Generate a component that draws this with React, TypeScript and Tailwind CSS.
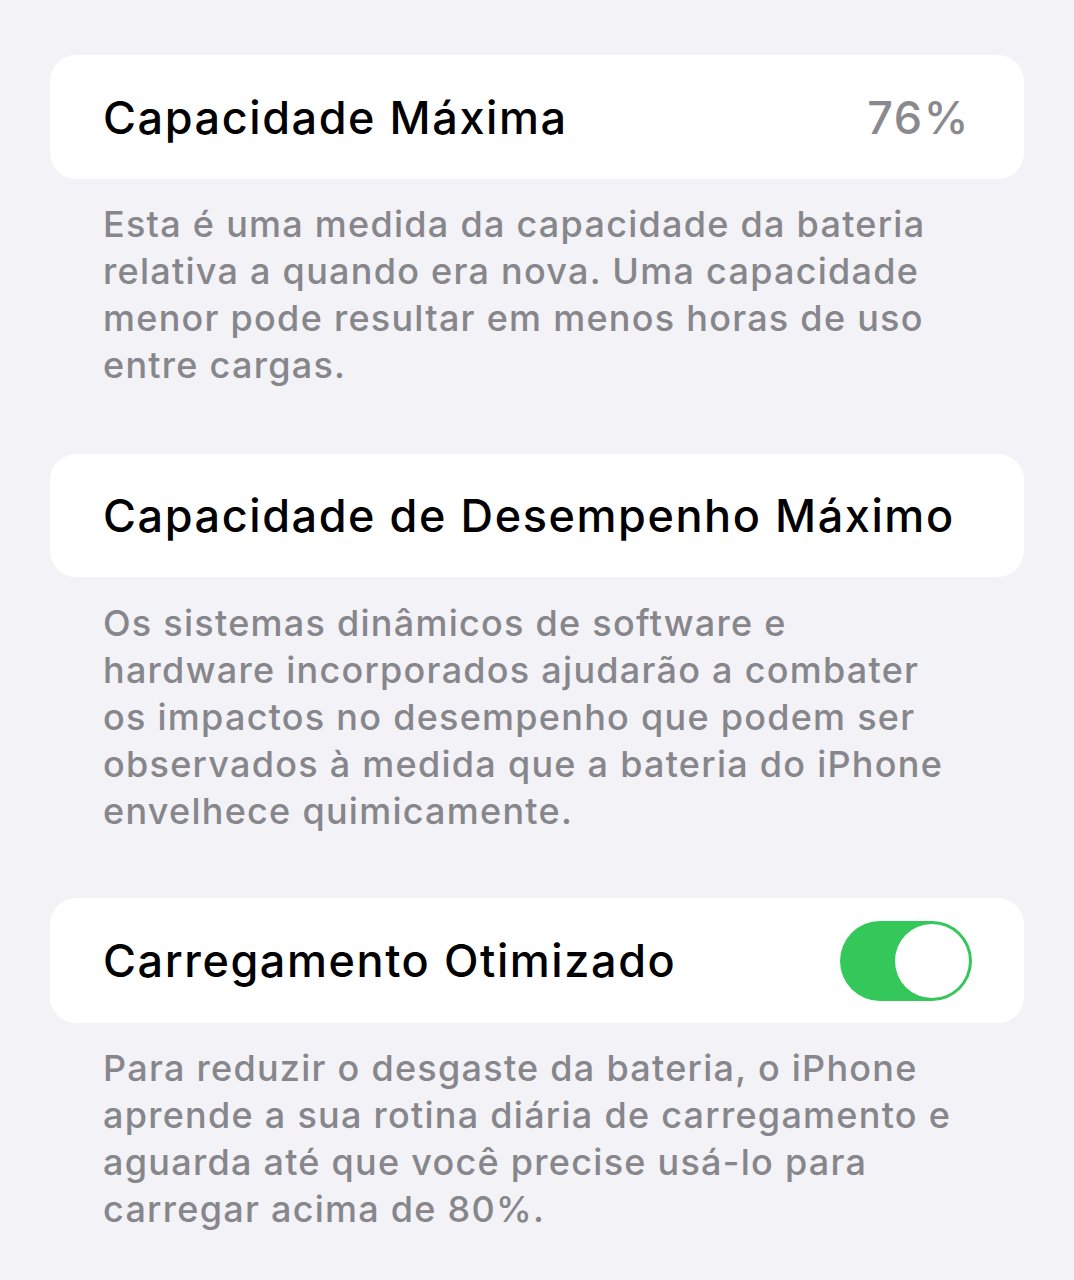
export default function App() {
  return (
    <div className="min-h-[1280px] w-full bg-[#f2f2f7] px-[50px] pt-[55px] font-['Inter','Noto_Sans',sans-serif]">
      <div className="flex h-[124px] items-center justify-between rounded-[26px] bg-white pl-[53px] pr-[54px]">
        <span className="text-[45px] font-medium leading-none tracking-[0.035em] text-black">Capacidade Máxima</span>
        <span className="text-[45px] font-medium leading-none tracking-[0.035em] text-[#8a8a8e]">76%</span>
      </div>
      <p className="mb-[65px] pl-[53px] pr-[60px] pt-[22px] text-[36px] font-medium leading-[47px] tracking-[0.035em] text-[#86868b]">
        Esta é uma medida da capacidade da bateria relativa a quando era nova. Uma capacidade menor pode resultar em
        menos horas de uso entre cargas.
      </p>

      <div className="flex h-[123px] items-center rounded-[26px] bg-white pl-[53px] pr-[54px]">
        <span className="text-[45px] font-medium leading-none tracking-[0.035em] text-black">
          Capacidade de Desempenho Máximo
        </span>
      </div>
      <p className="mb-[63px] pl-[53px] pr-[60px] pt-[23px] text-[36px] font-medium leading-[47px] tracking-[0.035em] text-[#86868b]">
        Os sistemas dinâmicos de software e hardware incorporados ajudarão a combater os impactos no desempenho que
        podem ser observados à medida que a bateria do iPhone envelhece quimicamente.
      </p>

      <div className="flex h-[125px] items-center justify-between rounded-[26px] bg-white pl-[53px] pr-[52px]">
        <span className="text-[45px] font-medium leading-none tracking-[0.035em] text-black">Carregamento Otimizado</span>
        <div className="flex h-[80px] w-[132px] items-center justify-end rounded-full bg-[#34c759] p-[3px]">
          <div className="h-[74px] w-[74px] rounded-full bg-white" />
        </div>
      </div>
      <p className="pl-[53px] pr-[60px] pt-[22px] text-[36px] font-medium leading-[47px] tracking-[0.035em] text-[#86868b]">
        Para reduzir o desgaste da bateria, o iPhone aprende a sua rotina diária de carregamento e aguarda até que
        você precise usá-lo para carregar acima de 80%.
      </p>
    </div>
  );
}
